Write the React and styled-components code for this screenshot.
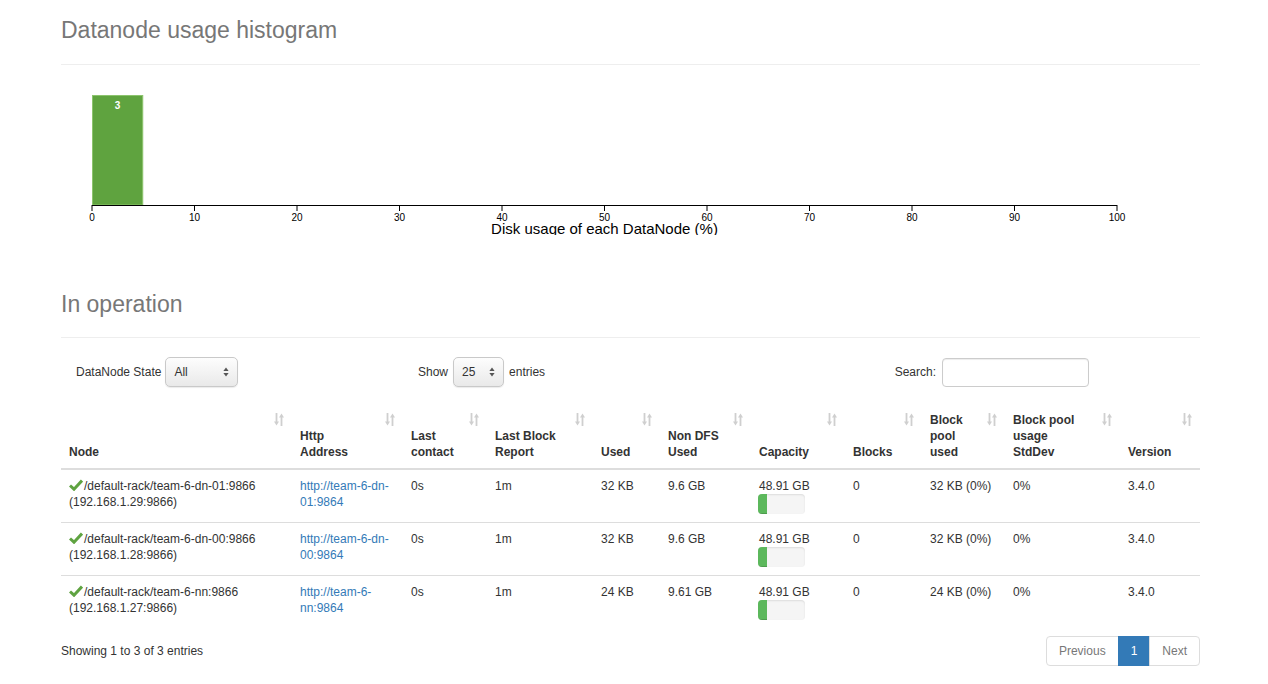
import React from "react";
import styled, { createGlobalStyle } from "styled-components";

const GlobalStyle = createGlobalStyle`
  html, body { margin: 0; padding: 0; background: #fff; }
  body {
    font-family: "Liberation Sans", Arial, Helvetica, sans-serif;
    font-size: 12px;
    line-height: 16px;
    color: #333;
  }
  * { box-sizing: border-box; }
`;

const Page = styled.div`
  width: 1139px;
  margin-left: 61px;
  padding-top: 17px;
  padding-bottom: 20px;
`;

const PageHeader = styled.div`
  border-bottom: 1px solid #eee;
  padding-bottom: ${p => p.$pb || 21}px;
  margin-top: ${p => p.$top || 0}px;
`;

const Title = styled.h1`
  margin: 0;
  font-size: 23px;
  line-height: 26px;
  font-weight: normal;
  color: #777;
`;

const Chart = styled.svg`
  display: block;
  width: 1139px;
  height: 170px;
  overflow: hidden;
`;

const FilterRow = styled.div`
  display: flex;
  align-items: center;
  margin-top: 19px;
  padding-right: 111px;
`;

const FilterGroup = styled.div`
  display: flex;
  align-items: center;
  gap: ${p => p.$gap || 5}px;
  width: ${p => (p.$w ? `${p.$w}px` : "auto")};
  padding-left: ${p => p.$pl || 0}px;
  margin-left: ${p => (p.$push ? "auto" : "0")};
`;

const SelectBox = styled.div`
  display: flex;
  align-items: center;
  justify-content: space-between;
  width: ${p => p.$w}px;
  height: 30px;
  padding: 0 8px 0 8px;
  border: 1px solid #c9c9c9;
  border-radius: 5px;
  background: linear-gradient(#fdfdfd, #e9e9e9);
  box-shadow: 0 1px 1px rgba(0, 0, 0, 0.08);
  color: #333;
`;

const SearchInput = styled.div`
  width: 147px;
  height: 29px;
  border: 1px solid #ccc;
  border-radius: 4px;
  box-shadow: inset 0 1px 1px rgba(0, 0, 0, 0.075);
  background: #fff;
`;

const Table = styled.table`
  width: 1139px;
  margin-top: 17px;
  border-collapse: collapse;
  table-layout: fixed;
`;

const Col = styled.col`
  width: ${p => p.$w}px;
`;

const Th = styled.th`
  position: relative;
  padding: 8px;
  text-align: left;
  vertical-align: bottom;
  font-weight: bold;
  line-height: 16px;
  border-bottom: 2px solid #ddd;
`;

const SortIcon = styled.svg`
  position: absolute;
  top: 9px;
  right: 8px;
  width: 10px;
  height: 13px;
`;

const Tr = styled.tr`
  & + & > td { border-top: 1px solid #ddd; }
`;

const Td = styled.td`
  padding: 8px;
  vertical-align: top;
  line-height: 16px;
`;

const Check = styled.svg`
  width: 14px;
  height: 12px;
  margin-right: 1px;
  vertical-align: -1px;
`;

const Link = styled.a`
  color: #337ab7;
  text-decoration: none;
`;

const Progress = styled.div`
  width: 47px;
  height: 20px;
  margin-left: -1px;
  background: #f5f5f5;
  border-radius: 4px;
  box-shadow: inset 0 1px 2px rgba(0, 0, 0, 0.1);
  overflow: hidden;
`;

const ProgressFill = styled.div`
  height: 100%;
  background: #5cb85c;
  box-shadow: inset 0 -1px 0 rgba(0, 0, 0, 0.15);
`;

const Footer = styled.div`
  display: flex;
  align-items: center;
  justify-content: space-between;
  margin-top: 8px;
`;

const Pagination = styled.div`
  display: flex;
`;

const PageBtn = styled.div`
  padding: 6px 12px;
  line-height: 16px;
  border: 1px solid ${p => (p.$active ? "#337ab7" : "#ddd")};
  background: ${p => (p.$active ? "#337ab7" : "#fff")};
  color: ${p => (p.$active ? "#fff" : "#777")};
  margin-left: -1px;
  &:first-child { margin-left: 0; border-radius: 4px 0 0 4px; }
  &:last-child { border-radius: 0 4px 4px 0; }
`;

const UpDown = () => (
  <svg width="6" height="10" viewBox="0 0 6 10">
    <path d="M3 0.5 L5.6 4 L0.4 4 Z" fill="#555" />
    <path d="M3 9.5 L5.6 6 L0.4 6 Z" fill="#555" />
  </svg>
);

const Sort = () => (
  <SortIcon viewBox="0 0 10 13">
    <rect x="1.6" y="0" width="1.8" height="9" fill="#cfcfcf" />
    <path d="M0 8.5 L5 8.5 L2.5 12.5 Z" fill="#cfcfcf" />
    <rect x="6.6" y="4" width="1.8" height="9" fill="#cfcfcf" />
    <path d="M5 4.5 L10 4.5 L7.5 0.5 Z" fill="#cfcfcf" />
  </SortIcon>
);

const OkIcon = () => (
  <Check viewBox="0 0 14 12">
    <path d="M1 6.5 L5 10.2 L13 1.5" fill="none" stroke="#5fa341" strokeWidth="3" />
  </Check>
);

const columns = [
  { w: 231, label: ["Node"] },
  { w: 111, label: ["Http", "Address"] },
  { w: 84, label: ["Last", "contact"] },
  { w: 106, label: ["Last Block", "Report"] },
  { w: 67, label: ["Used"] },
  { w: 91, label: ["Non DFS", "Used"] },
  { w: 94, label: ["Capacity"] },
  { w: 77, label: ["Blocks"] },
  { w: 83, label: ["Block", "pool", "used"] },
  { w: 115, label: ["Block pool", "usage", "StdDev"] },
  { w: 80, label: ["Version"] },
];

const rows = [
  { node: "/default-rack/team-6-dn-01:9866", addr: "(192.168.1.29:9866)", http: "http://team-6-dn-01:9864", used: "32 KB", nondfs: "9.6 GB", pct: 19.6, bp: "32 KB (0%)" },
  { node: "/default-rack/team-6-dn-00:9866", addr: "(192.168.1.28:9866)", http: "http://team-6-dn-00:9864", used: "32 KB", nondfs: "9.6 GB", pct: 19.6, bp: "32 KB (0%)" },
  { node: "/default-rack/team-6-nn:9866", addr: "(192.168.1.27:9866)", http: "http://team-6-nn:9864", used: "24 KB", nondfs: "9.61 GB", pct: 19.6, bp: "24 KB (0%)" },
];

const Histogram = () => {
  const x0 = 31;
  const x1 = 1056;
  const step = (x1 - x0) / 10;
  const ticks = Array.from({ length: 11 }, (_, i) => i * 10);
  return (
    <Chart viewBox="0 0 1139 170">
      <rect x={x0 + 0.5} y="30.5" width={step / 2 - 1} height="109.5" fill="#5fa33f" stroke="#8cc46d" strokeWidth="1" />
      <text x={x0 + step / 4} y="44" fill="#fff" fontSize="10" fontWeight="bold" textAnchor="middle" fontFamily="Liberation Sans, Arial, sans-serif">3</text>
      <line x1={x0} y1="140.5" x2={x1} y2="140.5" stroke="#000" strokeWidth="1" />
      {ticks.map((t, i) => (
        <g key={t}>
          <line x1={x0 + i * step} y1="140" x2={x0 + i * step} y2="146" stroke="#000" strokeWidth="1" />
          <text x={x0 + i * step} y="155.5" fontSize="10" textAnchor="middle" fill="#000" fontFamily="Liberation Sans, Arial, sans-serif">{t}</text>
        </g>
      ))}
      <text x={(x0 + x1) / 2} y="169" fontSize="15" textAnchor="middle" fill="#000" fontFamily="Liberation Sans, Arial, sans-serif">Disk usage of each DataNode (%)</text>
    </Chart>
  );
};

export default function App() {
  return (
    <>
      <GlobalStyle />
      <Page>
        <PageHeader $pb={21}>
          <Title>Datanode usage histogram</Title>
        </PageHeader>
        <Histogram />
        <PageHeader $top={56} $pb={20}>
          <Title>In operation</Title>
        </PageHeader>

        <FilterRow>
          <FilterGroup $w={357} $pl={15} $gap={4}>
            <span>DataNode State</span>
            <SelectBox $w={73}>
              <span>All</span>
              <UpDown />
            </SelectBox>
          </FilterGroup>
          <FilterGroup>
            <span>Show</span>
            <SelectBox $w={51}>
              <span>25</span>
              <UpDown />
            </SelectBox>
            <span>entries</span>
          </FilterGroup>
          <FilterGroup $push $gap={6}>
            <span>Search:</span>
            <SearchInput />
          </FilterGroup>
        </FilterRow>

        <Table>
          <colgroup>
            {columns.map((c, i) => (
              <Col key={i} $w={c.w} />
            ))}
          </colgroup>
          <thead>
            <tr>
              {columns.map((c, i) => (
                <Th key={i}>
                  {c.label.map((l, j) => (
                    <React.Fragment key={j}>
                      {j > 0 && <br />}
                      {l}
                    </React.Fragment>
                  ))}
                  <Sort />
                </Th>
              ))}
            </tr>
          </thead>
          <tbody>
            {rows.map((r, i) => (
              <Tr key={i}>
                <Td>
                  <OkIcon />
                  {r.node} {r.addr}
                </Td>
                <Td>
                  <Link href="#">{r.http}</Link>
                </Td>
                <Td>0s</Td>
                <Td>1m</Td>
                <Td>{r.used}</Td>
                <Td>{r.nondfs}</Td>
                <Td>
                  48.91 GB
                  <Progress>
                    <ProgressFill style={{ width: `${r.pct}%` }} />
                  </Progress>
                </Td>
                <Td>0</Td>
                <Td>{r.bp}</Td>
                <Td>0%</Td>
                <Td>3.4.0</Td>
              </Tr>
            ))}
          </tbody>
        </Table>

        <Footer>
          <span>Showing 1 to 3 of 3 entries</span>
          <Pagination>
            <PageBtn>Previous</PageBtn>
            <PageBtn $active>1</PageBtn>
            <PageBtn>Next</PageBtn>
          </Pagination>
        </Footer>
      </Page>
    </>
  );
}
